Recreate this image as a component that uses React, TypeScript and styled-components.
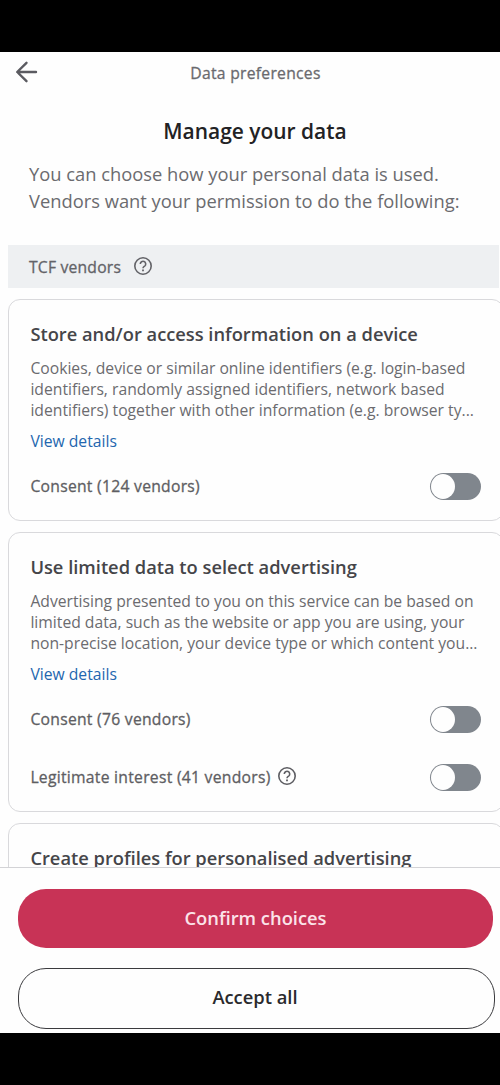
import React from "react";
import styled, { createGlobalStyle, css } from "styled-components";

const GlobalStyle = createGlobalStyle`
  * { box-sizing: border-box; }
  body { margin: 0; background: #fdfdfd; }
  h1, h2, p { margin: 0; }
  button { font: inherit; }
`;

const mediumText = css`
  font-size: 15.7px;
  letter-spacing: 0.27px;
  -webkit-text-stroke: 0.3px currentColor;
`;

const Screen = styled.div`
  width: 500px;
  height: 1085px;
  display: flex;
  flex-direction: column;
  overflow: hidden;
  background: #fefefe;
  font-family: "Open Sans", "Noto Sans", sans-serif;
  white-space: nowrap;
`;

const SystemBar = styled.div<{ $height: number }>`
  flex: none;
  width: 499.5px;
  height: ${(p) => p.$height}px;
  background: #000;
`;

const Header = styled.header`
  flex: none;
  height: 42px;
  padding: 0 15px;
  display: grid;
  grid-template-columns: 24px 1fr 13px;
  align-items: center;
`;

const BackButton = styled.button`
  display: flex;
  margin-top: -2px;
  padding: 0;
  border: 0;
  background: none;
  color: #5b5b61;
`;

const HeaderTitle = styled.div`
  text-align: center;
  ${mediumText}
  color: #6a6a6e;
`;

const Content = styled.main`
  flex: none;
  height: 773px;
  overflow: hidden;
`;

const PageTitle = styled.h1`
  padding: 22px 0 0 10px;
  text-align: center;
  font-size: 20.95px;
  line-height: 30px;
  font-weight: 600;
  color: #222224;
`;

const Intro = styled.p`
  padding: 15px 0 0 29px;
  font-size: 18.33px;
  line-height: 26.5px;
  color: #6b6b6f;
`;

const VendorBar = styled.div`
  width: 491px;
  height: 43px;
  margin: 31px 0 11px 8px;
  padding: 0 21px;
  display: flex;
  align-items: center;
  gap: 12px;
  background: #eef0f2;
  color: #636368;
  ${mediumText}
  letter-spacing: 0.2px;

  svg { margin-top: -2px; }
`;

const Card = styled.section<{ $height: number }>`
  width: 496px;
  height: ${(p) => p.$height}px;
  margin: 0 0 11px 8px;
  padding: 21px 22.5px 0 21.4px;
  border: 1.5px solid #d9d9dc;
  border-radius: 12px;
`;

const CardTitle = styled.h2`
  font-size: 18.3px;
  line-height: 26px;
  font-weight: 600;
  color: #454549;
`;

const Description = styled.p`
  margin-top: 11px;
  font-size: 15.7px;
  line-height: 21px;
  color: #6b6b6f;
`;

const DetailsLink = styled.a`
  display: block;
  margin-top: 9px;
  font-size: 15.7px;
  line-height: 22px;
  color: #2366ae;
`;

const ConsentRow = styled.div`
  height: 58px;
  display: flex;
  align-items: center;
  justify-content: space-between;
`;

const ConsentRows = styled.div`
  margin-top: 5px;
`;

const ConsentLabel = styled.span`
  display: flex;
  align-items: center;
  gap: 6px;
  margin-top: -1px;
  ${mediumText}
  color: #5e5e63;

  svg { margin-top: -1px; }
`;

const Track = styled.button`
  width: 51px;
  height: 27px;
  padding: 1px;
  display: flex;
  border: 0;
  border-radius: 14px;
  background: #80868d;
`;

const Knob = styled.span`
  width: 24px;
  height: 25px;
  border-radius: 50%;
  background: #fefefe;
`;

const Footer = styled.footer`
  flex: none;
  height: 166px;
  padding: 21px 5px 0 18px;
  border-top: 1.5px solid #d3d3d6;
  display: flex;
  flex-direction: column;
  align-items: flex-start;
  gap: 20px;
`;

const PillButton = styled.button<{ $primary?: boolean }>`
  flex: none;
  width: ${(p) => (p.$primary ? 475 : 477)}px;
  height: ${(p) => (p.$primary ? 59 : 61)}px;
  padding: ${(p) => (p.$primary ? "0 0 2px" : "0 3px 4px 0")};
  border: ${(p) => (p.$primary ? "0" : "1.5px solid #3b3b3e")};
  border-radius: 28px;
  background: ${(p) => (p.$primary ? "#c83356" : "#fefefe")};
  color: ${(p) => (p.$primary ? "#fbe3e9" : "#2a2a2d")};
  font-size: 18.35px;
  font-weight: 600;
`;

const HelpIcon = () => (
  <svg width="20" height="20" viewBox="0 0 20 20" fill="none" stroke="currentColor" strokeWidth="1.6">
    <circle cx="10" cy="10" r="8.2" />
    <path d="M7.3 8a2.7 2.7 0 1 1 4.5 2c-1 .85-1.8 1.2-1.8 2.2" />
    <path d="M10 13.4v1.8" strokeWidth="1.8" />
  </svg>
);

const Toggle = ({ label }: { label: string }) => (
  <Track role="switch" aria-checked={false} aria-label={label}>
    <Knob />
  </Track>
);

type Purpose = {
  title: string;
  height: number;
  lines: string[];
  consents: { label: string; help?: boolean }[];
};

const purposes: Purpose[] = [
  {
    title: "Store and/or access information on a device",
    height: 222,
    lines: [
      "Cookies, device or similar online identifiers (e.g. login-based",
      "identifiers, randomly assigned identifiers, network based",
      "identifiers) together with other information (e.g. browser ty...",
    ],
    consents: [{ label: "Consent (124 vendors)" }],
  },
  {
    title: "Use limited data to select advertising",
    height: 280,
    lines: [
      "Advertising presented to you on this service can be based on",
      "limited data, such as the website or app you are using, your",
      "non-precise location, your device type or which content you...",
    ],
    consents: [
      { label: "Consent (76 vendors)" },
      { label: "Legitimate interest (41 vendors)", help: true },
    ],
  },
];

export default function App() {
  return (
    <>
      <GlobalStyle />
      <Screen>
        <SystemBar $height={52} />
        <Header>
          <BackButton aria-label="Back">
            <svg width="24" height="24" viewBox="0 0 24 24" fill="none" stroke="currentColor" strokeWidth="2.4" strokeLinecap="round" strokeLinejoin="round">
              <path d="M21 12H2.5M11.5 2.8 2.2 12l9.3 9.2" />
            </svg>
          </BackButton>
          <HeaderTitle>Data preferences</HeaderTitle>
        </Header>
        <Content>
          <PageTitle>Manage your data</PageTitle>
          <Intro>
            You can choose how your personal data is used.
            <br />
            Vendors want your permission to do the following:
          </Intro>
          <VendorBar>
            TCF vendors
            <HelpIcon />
          </VendorBar>
          {purposes.map((p) => (
            <Card key={p.title} $height={p.height}>
              <CardTitle>{p.title}</CardTitle>
              <Description>
                {p.lines.map((line) => (
                  <React.Fragment key={line}>
                    {line}
                    <br />
                  </React.Fragment>
                ))}
              </Description>
              <DetailsLink>View details</DetailsLink>
              <ConsentRows>
                {p.consents.map((c) => (
                  <ConsentRow key={c.label}>
                    <ConsentLabel>
                      {c.label}
                      {c.help && <HelpIcon />}
                    </ConsentLabel>
                    <Toggle label={c.label} />
                  </ConsentRow>
                ))}
              </ConsentRows>
            </Card>
          ))}
          <Card $height={120}>
            <CardTitle>Create profiles for personalised advertising</CardTitle>
          </Card>
        </Content>
        <Footer>
          <PillButton $primary>Confirm choices</PillButton>
          <PillButton>Accept all</PillButton>
        </Footer>
        <SystemBar $height={52} />
      </Screen>
    </>
  );
}
